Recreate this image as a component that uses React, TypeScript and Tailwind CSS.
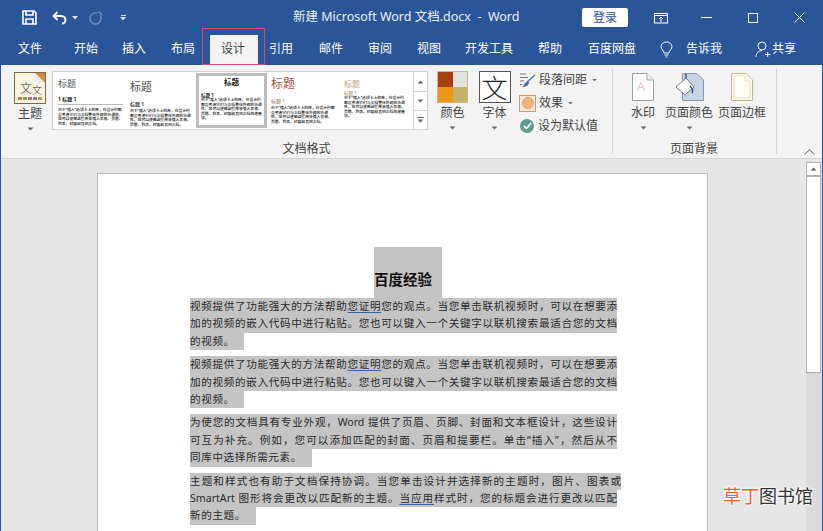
const tabs = [
  { label: "开始", w: "w-[48px]" },
  { label: "插入", w: "w-[49px]" },
  { label: "布局", w: "w-[50px]" },
];
const tabsRight = [
  { label: "引用", w: "w-[50px]" },
  { label: "邮件", w: "w-[49px]" },
  { label: "审阅", w: "w-[49px]" },
  { label: "视图", w: "w-[48px]" },
  { label: "开发工具", w: "w-[73px]" },
  { label: "帮助", w: "w-[50px]" },
  { label: "百度网盘", w: "w-[72px]" },
];

const bodyCopy = "对于\u201C插入\u201D选项卡上的库\uFF0C在设计时都会考虑它们与文档整体外观的协调性。您可以使用这些库来插入表格、页眉、列表、封面和其他文档构建基块。";
const shortCopy = "对于\u201C插入\u201D选项卡上的库\uFF0C在设计时都会考虑它们与文档整体外观的协调性。您可以使用这些库来插入表格、页眉、列表、封面和其他文档。";

function Chevron({ className = "" }: { className?: string }) {
  return (
    <svg width="7" height="4" viewBox="0 0 7 4" className={className}>
      <path d="M0.5 0.5 L3.5 3.5 L6.5 0.5 Z" fill="#666" />
    </svg>
  );
}

function SaveIcon() {
  return (
    <svg width="15" height="15" viewBox="0 0 15 15" fill="none" stroke="#fff" strokeWidth="1.6">
      <path d="M1 1 H12 L14 3 V14 H1 Z" />
      <path d="M4 1 V5 H11 V1" />
      <path d="M4 14 V9 H11 V14" />
    </svg>
  );
}

function UndoIcon() {
  return (
    <svg width="15" height="14" viewBox="0 0 15 14" fill="none" stroke="#fff" strokeWidth="1.9">
      <path d="M1.5 5 H9 C12 5 13.5 7 13.5 9 C13.5 11 12 12.5 10 12.5" />
      <path d="M5.5 1 L1.5 5 L5.5 9" />
    </svg>
  );
}

function RedoIcon() {
  return (
    <svg width="15" height="14" viewBox="0 0 15 14" fill="none" stroke="#6f8db8" strokeWidth="1.5">
      <path d="M9 2 C5 1.5 2 4 2 7.5 C2 10.5 4.5 13 7.5 13 C10.5 13 13 10.5 13 7.5 V2" />
      <path d="M13 2 L10 1" />
    </svg>
  );
}

function ThemeIcon() {
  return (
    <div className="relative w-[32px] h-[32px] border border-[#7a6a4a] bg-[#fbf3e2] overflow-hidden">
      <span className="absolute left-[5px] top-[9px] text-[12px] leading-[13px] font-light text-[#333]">文</span>
      <span className="absolute left-[17px] top-[12px] text-[10px] leading-[11px] font-light text-[#333]">文</span>
      <div className="absolute left-[3px] bottom-[3px] flex gap-px">
        <div className="w-[4px] h-[3px] bg-[#b5814b]" />
        <div className="w-[4px] h-[3px] bg-[#8a9a5b]" />
        <div className="w-[4px] h-[3px] bg-[#b56a7a]" />
        <div className="w-[4px] h-[3px] bg-[#8a7ab0]" />
        <div className="w-[4px] h-[3px] bg-[#c09a4a]" />
      </div>
      <svg width="10" height="10" viewBox="0 0 10 10" className="absolute right-0 top-0">
        <path d="M0 0 H10 V10 Z" fill="#d9893a" />
        <path d="M0 0 L10 10 H0 Z" fill="#eee" />
      </svg>
    </div>
  );
}

function Thumb({ children, className = "" }: { children: React.ReactNode; className?: string }) {
  return <div className={`shrink-0 h-[55px] ${className}`}>{children}</div>;
}

function Tiny({ text = bodyCopy, className = "" }: { text?: string; className?: string }) {
  return <p className={`text-[3.8px] leading-[4.6px] font-medium text-[#111] ${className}`}>{text}</p>;
}

function Gallery() {
  return (
    <div className="flex h-[59px] w-[376px] bg-white border border-[#d2d2d2]">
      <div className="flex flex-1 items-start pt-px pl-[5px]">
        <Thumb className="w-[65px] mr-[7px]">
          <p className="text-[9px] leading-[12px] text-[#555] mt-[5px]">标题</p>
          <p className="text-[5px] leading-[7px] font-bold text-[#222] mt-[6px] pb-[1px] border-b border-[#bbb]">1 标题 1</p>
          <Tiny text={shortCopy} className="mt-[3px]" />
        </Thumb>
        <Thumb className="w-[63px] mr-[3px]">
          <p className="text-[11px] leading-[15px] text-[#555] mt-[6px]">标题</p>
          <p className="text-[5px] leading-[7px] font-bold text-[#444] mt-[7px]">标题 1</p>
          <Tiny text={shortCopy} className="mt-[1px]" />
        </Thumb>
        <Thumb className="w-[71px] mr-[4px] border-[3px] border-[#bcbcbc] px-[2px]">
          <p className="text-[7.5px] leading-[9px] font-bold text-center text-[#222] mt-[2px]">标题</p>
          <p className="text-[4.5px] leading-[6px] font-bold text-[#222] mt-[5px]">标题 1</p>
          <Tiny />
        </Thumb>
        <Thumb className="w-[64px] mr-[9px]">
          <p className="text-[12px] leading-[16px] text-[#a5583a] mt-[3px]">标题</p>
          <p className="text-[5px] leading-[7px] text-[#8a6a3a] mt-[6px]">标题 1</p>
          <Tiny text={shortCopy} className="mt-[1px]" />
        </Thumb>
        <Thumb className="w-[63px]">
          <p className="text-[8px] leading-[11px] text-[#c4a478] mt-[5px]">标题</p>
          <p className="text-[4.5px] leading-[5px] text-[#a9824e] mt-[2px]">标题 1</p>
          <Tiny />
        </Thumb>
      </div>
      <div className="w-[14px] flex flex-col border-l border-[#d2d2d2] shrink-0">
        <div className="h-[20px] flex items-center justify-center border-b border-[#d2d2d2]">
          <Chevron className="rotate-180" />
        </div>
        <div className="h-[19px] flex items-center justify-center border-b border-[#d2d2d2]">
          <Chevron />
        </div>
        <div className="flex-1 flex flex-col gap-px items-center justify-center">
          <div className="w-[7px] h-px bg-[#666]" />
          <Chevron />
        </div>
      </div>
    </div>
  );
}

function PageIcon({ children }: { children?: React.ReactNode }) {
  return (
    <svg width="22" height="28" viewBox="0 0 22 28">
      <path d="M0.5 0.5 H15 L21.5 7 V27.5 H0.5 Z" fill="#fff" stroke="#a0a0a0" />
      <path d="M15 0.5 V7 H21.5" fill="#f0f0f0" stroke="#a0a0a0" />
      {children}
    </svg>
  );
}

function Line({ children, w, last = false }: { children: React.ReactNode; w: string; last?: boolean }) {
  return (
    <div
      className={`${w} h-[17.4px] leading-[17.4px] bg-[#c4c4c4] text-[10.6px] text-[#2a2a2a] whitespace-nowrap ${
        last ? "tracking-[0.6px]" : "text-justify [text-align-last:justify]"
      }`}
    >
      {children}
    </div>
  );
}

function Wavy({ children }: { children: React.ReactNode }) {
  return <span className="underline decoration-[#3a5fa8] underline-offset-2">{children}</span>;
}

function VideoParagraph() {
  return (
    <div className="mb-[6px]">
      <Line w="w-[427px]">
        视频提供了功能强大的方法帮助<Wavy>您证明</Wavy>{"您的观点。当您单击联机视频时\uFF0C可以在想要添"}
      </Line>
      <Line w="w-[427px]">加的视频的嵌入代码中进行粘贴。您也可以键入一个关键字以联机搜索最适合您的文档</Line>
      <Line w="w-[54px]" last>
        的视频。
      </Line>
    </div>
  );
}

export default function App() {
  return (
    <div className="relative w-[823px] h-[531px] overflow-hidden flex flex-col bg-[#e6e6e6] border-x border-[#2a5699] font-['Noto_Sans','Noto_Sans_CJK_SC',sans-serif]">
      {/* Title bar */}
      <div className="h-[35px] bg-[#2a5699] flex items-center text-white shrink-0">
        <div className="ml-[21px] w-[30px]">
          <SaveIcon />
        </div>
        <UndoIcon />
        <svg width="6" height="4" viewBox="0 0 6 4" className="ml-[5px]">
          <path d="M0 0 H6 L3 3.5 Z" fill="#dbe4f2" />
        </svg>
        <div className="ml-[10px]">
          <RedoIcon />
        </div>
        <div className="ml-[17px] flex flex-col items-center gap-px w-[6px]">
          <div className="w-[5px] h-px bg-[#dbe4f2]" />
          <svg width="6" height="4" viewBox="0 0 6 4">
            <path d="M0 0 H6 L3 3.5 Z" fill="#dbe4f2" />
          </svg>
        </div>
        <p className="ml-[167px] w-[236px] text-[12.5px] whitespace-pre text-[#e9eef6]">新建 Microsoft Word 文档.docx  -  Word</p>
        <div className="ml-[53px] w-[46px] h-[19px] bg-white rounded-[2px] text-[#2a5699] text-[12px] leading-[19px] text-center">登录</div>
        <svg width="14" height="12" viewBox="0 0 14 12" fill="none" stroke="#fff" className="ml-[26px]">
          <rect x="0.5" y="1.5" width="13" height="9.5" />
          <path d="M0.5 3.5 H13.5 M7 10 V5.5 M5 7 L7 5 L9 7" />
        </svg>
        <div className="ml-[33px] w-[11px] h-px bg-white" />
        <div className="ml-[36px] w-[10px] h-[10px] border border-white" />
        <svg width="11" height="11" viewBox="0 0 11 11" stroke="#fff" className="ml-[36px]">
          <path d="M0.5 0.5 L10.5 10.5 M10.5 0.5 L0.5 10.5" />
        </svg>
      </div>

      {/* Tabs */}
      <div className="h-[30px] bg-[#2a5699] flex items-center pb-[2px] text-white text-[12px] shrink-0">
        <div className="ml-[17px] w-[56px]">文件</div>
        {tabs.map((t) => (
          <div key={t.label} className={t.w}>
            {t.label}
          </div>
        ))}
        <div className="self-end h-[30px] w-[48px] -ml-[11px] -mb-[2px] mr-[11px] pr-[2px] bg-[#f3f3f3] text-[#444] text-center leading-[27px]">设计</div>
        {tabsRight.map((t) => (
          <div key={t.label} className={t.w}>
            {t.label}
          </div>
        ))}
        <svg width="13" height="17" viewBox="0 0 13 17" fill="none" stroke="#fff" className="mr-[13px]">
          <path d="M4 12 C4 9.5 1 8.5 1 5.5 C1 3 3.5 1 6.5 1 C9.5 1 12 3 12 5.5 C12 8.5 9 9.5 9 12 Z" />
          <path d="M4.5 14 H8.5 M5.5 16 H7.5" />
        </svg>
        <div className="w-[69px]">告诉我</div>
        <svg width="16" height="17" viewBox="0 0 16 17" fill="none" stroke="#fff">
          <circle cx="7" cy="5" r="4" />
          <path d="M1 16 C1 12 3.5 10 7 9.5 M10 13.5 H15.5 M12.7 11 V16" />
        </svg>
        <div className="ml-[1px]">共享</div>
      </div>

      {/* Ribbon */}
      <div className="h-[94px] bg-[#f3f3f3] border-b border-[#d4d4d4] flex text-[12px] text-[#444] shrink-0">
        <div className="w-[611px] shrink-0 flex flex-col">
          <div className="h-[75px] flex pl-[13px]">
            <div className="w-[32px] pt-[7px] flex flex-col items-center shrink-0">
              <ThemeIcon />
              <p className="mt-[1px] leading-[18px]">主题</p>
              <Chevron className="mt-[4px]" />
            </div>
            <div className="ml-[6px] pt-[6px] shrink-0">
              <Gallery />
            </div>

            <div className="ml-[9px] w-[31px] pt-[6px] flex flex-col items-center shrink-0">
              <div className="w-[31px] h-[32px] grid grid-cols-2 grid-rows-2 border border-[#c9b78c]">
                <div className="bg-[#a8410f]" />
                <div className="bg-[#e2e2e0]" />
                <div className="bg-[#f09516]" />
                <div className="bg-[#c2b36a]" />
              </div>
              <p className="mt-[1px] leading-[18px] whitespace-nowrap">颜色</p>
              <Chevron className="mt-[4px]" />
            </div>

            <div className="ml-[11px] w-[31px] pt-[6px] flex flex-col items-center shrink-0">
              <div className="w-[32px] h-[32px] bg-white border border-[#555] text-[26px] leading-[30px] font-light text-center text-[#222] font-['Noto_Sans_CJK_SC',serif]">文</div>
              <p className="mt-[1px] leading-[18px] whitespace-nowrap">字体</p>
              <Chevron className="mt-[4px]" />
            </div>

            <div className="ml-[9px] w-[93px] pt-[5px] flex flex-col gap-[3px] shrink-0">
              <div className="flex items-center h-[20px]">
                <svg width="18" height="16" viewBox="0 0 18 16" fill="none">
                  <path d="M1 2 H7 M1 5.5 H9 M1 9 H5 M1 12.5 H3" stroke="#777" />
                  <path d="M16 3 L8 10" stroke="#4a7ab0" strokeWidth="1.5" />
                  <path d="M4 15 C5 11 8 9 10 10 C10 13 7 15 4 15 Z" fill="#4a6f9c" />
                </svg>
                <span className="ml-[2px]">段落间距</span>
                <Chevron className="ml-[4px] scale-75" />
              </div>
              <div className="flex items-center h-[20px]">
                <div className="w-[17px] h-[17px] border border-[#c69a7a] bg-[#fbe9d6] flex items-center justify-center">
                  <div className="w-[12px] h-[12px] rounded-full bg-[#efb587] border border-[#d99a68]" />
                </div>
                <span className="ml-[3px]">效果</span>
                <Chevron className="ml-[4px] scale-75" />
              </div>
              <div className="flex items-center h-[20px]">
                <div className="ml-px w-[14px] h-[14px] rounded-full bg-[#5c9c8c] flex items-center justify-center">
                  <svg width="9" height="8" viewBox="0 0 9 8" fill="none" stroke="#fff" strokeWidth="1.8">
                    <path d="M1 4 L3.5 6.5 L8 1" />
                  </svg>
                </div>
                <span className="ml-[4px] whitespace-nowrap">设为默认值</span>
              </div>
            </div>
          </div>
          <p className="leading-[18px] text-center">文档格式</p>
        </div>

        <div className="w-px h-[85px] mt-[4px] bg-[#d4d4d4] shrink-0" />

        <div className="w-[163px] shrink-0 flex flex-col">
          <div className="flex h-[75px]">
            <div className="ml-[11px] w-[38px] flex flex-col items-center pt-[8px]">
              <PageIcon>
                <text x="5" y="18" fontSize="12" fill="#e8b8b8" fontFamily="Liberation Sans">A</text>
              </PageIcon>
              <p className="mt-[3px] leading-[18px]">水印</p>
              <Chevron className="mt-[4px]" />
            </div>
            <div className="ml-px w-[52px] flex flex-col items-center pt-[8px]">
              <svg width="30" height="28" viewBox="0 0 30 28">
                <path d="M8.5 0.5 H23 L29.5 7 V27.5 H8.5 Z" fill="#c5d5e6" stroke="#8a9aaa" />
                <path d="M2 14 L12 5 L20 14 L11 22 Z" fill="#fff" stroke="#777" />
                <path d="M12 5 V1 M16 13 C18 15 20 17 18 20" stroke="#2a5699" fill="none" strokeWidth="1.5" />
              </svg>
              <p className="mt-[3px] leading-[18px] whitespace-nowrap">页面颜色</p>
              <Chevron className="mt-[4px]" />
            </div>
            <div className="ml-px w-[52px] flex flex-col items-center pt-[8px]">
              <svg width="22" height="28" viewBox="0 0 22 28">
                <path d="M0.5 0.5 H15 L21.5 7 V27.5 H0.5 Z" fill="#fffdf0" stroke="#c4b68c" strokeWidth="1" />
                <path d="M3 3 H14 V8 H19 V25 H3 Z" fill="#fffef4" stroke="#e8dcb4" />
              </svg>
              <p className="mt-[3px] leading-[18px] whitespace-nowrap">页面边框</p>
            </div>
          </div>
          <p className="leading-[18px] text-center pr-px">页面背景</p>
        </div>

        <div className="w-px h-[85px] mt-[4px] bg-[#d4d4d4] shrink-0" />

        <div className="flex-1 flex items-end justify-end pr-[7px] pb-[3px]">
          <svg width="11" height="6" viewBox="0 0 11 6" fill="none" stroke="#666">
            <path d="M0.5 5.5 L5.5 0.8 L10.5 5.5" />
          </svg>
        </div>
      </div>

      {/* Document area */}
      <div className="flex-1 flex min-h-0">
        <div className="flex-1 min-w-0 overflow-hidden pt-[14px] pl-[96px]">
          <div className="w-[611px] h-[400px] bg-white border border-[#b5b8bd] pl-[92px] pt-[73px]">
            <div className="ml-[184px] w-[68px] h-[51px] bg-[#c4c4c4] flex items-end pb-[9px] text-[14.5px] leading-[20px] font-bold text-[#111]">
              百度经验
            </div>
            <VideoParagraph />
            <VideoParagraph />
            <div className="mb-[6px]">
              <Line w="w-[427px]">{"为使您的文档具有专业外观\uFF0CWord 提供了页眉、页脚、封面和文本框设计\uFF0C这些设计"}</Line>
              <Line w="w-[427px]">{"可互为补充。例如\uFF0C您可以添加匹配的封面、页眉和提要栏。单击\u201C插入\u201D\uFF0C然后从不"}</Line>
              <Line w="w-[122px]" last>
                同库中选择所需元素。
              </Line>
            </div>
            <div>
              <Line w="w-[431px]">{"主题和样式也有助于文档保持协调。当您单击设计并选择新的主题时\uFF0C图片、图表或"}</Line>
              <Line w="w-[427px]">
                SmartArt 图形将会更改以匹配新的主题。<Wavy>当应用</Wavy>{"样式时\uFF0C您的标题会进行更改以匹配"}
              </Line>
              <Line w="w-[66px]" last>
                新的主题。
              </Line>
            </div>
          </div>
        </div>
        <div className="w-[16px] shrink-0 flex flex-col">
          <div className="mt-[3px] h-[211px] w-[15px] bg-white border border-[#b0b0b0] flex flex-col shrink-0">
            <div className="h-[14px] border-b-2 border-[#b0b0b0] flex items-center justify-center">
              <Chevron className="rotate-180" />
            </div>
          </div>
          <div className="flex-1 bg-[#dadada]" />
        </div>
      </div>

      {/* Tab highlight and watermark sit over the window */}
      <div className="absolute left-[201px] top-[28px] w-[63px] h-[37px] border border-[#c8506e]" />
      <div className="absolute left-[722px] top-[484px] text-[18px] leading-[24px] whitespace-nowrap [text-shadow:0_0_3px_#fff,0_0_3px_#fff,0_0_3px_#fff]">
        <span className="text-[#e8642a]">草丁</span>
        <span className="text-[#333]">图书馆</span>
      </div>
    </div>
  );
}
